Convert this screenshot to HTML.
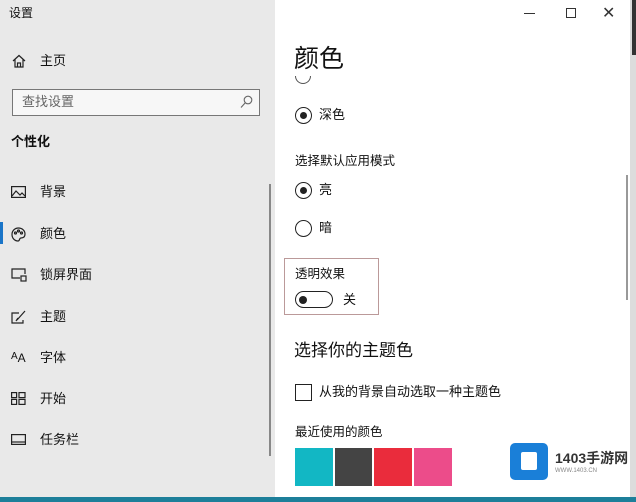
<!DOCTYPE html>
<html><head><meta charset="utf-8"><style>
*{margin:0;padding:0;box-sizing:border-box}
body{width:636px;height:502px;overflow:hidden;position:relative;background:#fff;font-family:"Liberation Sans","Noto Sans CJK SC",sans-serif;color:#111}
.abs{position:absolute}
#side{left:0;top:0;width:275px;height:497px;background:#e9e9e9}
.t{font-size:13px;white-space:nowrap;line-height:1.2}
.ic{position:absolute;left:11px}
</style></head><body>
<div id="side" class="abs"></div>
<div class="abs t" style="left:9px;top:6px;font-size:12px">设置</div>
<svg class="abs" style="left:12px;top:54px" width="14" height="14" viewBox="0 0 14 14" fill="none" stroke="#222" stroke-width="1.2"><path d="M1 7L7 1.5L13 7M3 5.5V13H11V5.5M5.5 13V9H8.5V13"/></svg>
<div class="abs t" style="left:40px;top:53px">主页</div>
<div class="abs" style="left:12px;top:89px;width:248px;height:27px;border:1.5px solid #777;background:#f7f7f7"></div>
<div class="abs t" style="left:22px;top:94px;color:#666">查找设置</div>
<svg class="abs" style="left:240px;top:95px" width="13" height="14" viewBox="0 0 13 14" fill="none" stroke="#666" stroke-width="1.1"><circle cx="8" cy="5" r="3.8"/><path d="M5.3 7.8L1 12.5"/></svg>
<div class="abs t" style="left:11px;top:134px;font-weight:bold">个性化</div>
<div class="abs" style="left:269px;top:184px;width:2px;height:272px;background:#888"></div>
<svg class="ic abs" style="top:186px" width="15" height="12" viewBox="0 0 15 12" fill="none" stroke="#222" stroke-width="1.2"><rect x="0.6" y="0.6" width="13.8" height="10.8"/><path d="M1 10L5 5L9 9L11 7L14 10"/></svg>
<div class="abs t" style="left:40px;top:184px">背景</div>
<div class="abs" style="left:0;top:222px;width:3px;height:22px;background:#1a75c8"></div>
<svg class="ic abs" style="top:227px" width="15" height="15" viewBox="0 0 15 15" fill="none" stroke="#222" stroke-width="1.2"><path d="M7.5 1C3.5 1 1 4 1 7.5S3.5 14 7 14C9 14 8 11 10 11S14 10 14 7C14 3.5 11 1 7.5 1Z"/><circle cx="4.5" cy="6" r="1"/><circle cx="7.5" cy="4" r="1"/><circle cx="10.5" cy="6" r="1"/></svg>
<div class="abs t" style="left:40px;top:226px">颜色</div>
<svg class="ic abs" style="top:268px" width="16" height="14" viewBox="0 0 16 14" fill="none" stroke="#222" stroke-width="1.2"><path d="M9 10H1V1H14V6"/><rect x="10" y="8" width="5" height="5"/></svg>
<div class="abs t" style="left:40px;top:267px">锁屏界面</div>
<svg class="ic abs" style="top:310px" width="16" height="14" viewBox="0 0 16 14" fill="none" stroke="#222" stroke-width="1.2"><path d="M12 10V13H1V3H8"/><path d="M6 10L14 1M5 11L7 8"/></svg>
<div class="abs t" style="left:40px;top:309px">主题</div>
<div class="abs" style="left:11px;top:348px;font-size:10px">A<span style="font-size:12px;position:relative;top:3px">A</span></div>
<div class="abs t" style="left:40px;top:350px">字体</div>
<svg class="ic abs" style="top:392px" width="15" height="13" viewBox="0 0 15 13" fill="none" stroke="#222" stroke-width="1.2"><rect x="0.6" y="0.6" width="5" height="5"/><rect x="8" y="0.6" width="6" height="5"/><rect x="0.6" y="7.4" width="5" height="5"/><rect x="8" y="7.4" width="6" height="5"/></svg>
<div class="abs t" style="left:40px;top:391px">开始</div>
<svg class="ic abs" style="top:434px" width="15" height="11" viewBox="0 0 15 11" fill="none" stroke="#222" stroke-width="1.2"><rect x="0.6" y="0.6" width="13.8" height="9.8"/><path d="M1 8H14"/></svg>
<div class="abs t" style="left:40px;top:432px">任务栏</div>

<div class="abs" style="left:524px;top:13px;width:11px;height:1.2px;background:#333"></div>
<div class="abs" style="left:566px;top:8px;width:10px;height:10px;border:1.2px solid #333"></div>
<div class="abs" style="left:602px;top:3px;font-size:16px;color:#333">✕</div>
<div class="abs" style="left:630px;top:0;width:6px;height:497px;background:#dcdcdc"></div>
<div class="abs" style="left:632px;top:0;width:4px;height:55px;background:#333"></div>
<div class="abs" style="left:626px;top:175px;width:2px;height:125px;background:#999"></div>

<div class="abs" style="left:294px;top:44px;font-size:25px;line-height:1.2">颜色</div>
<div class="abs" style="left:295px;top:76px;width:16px;height:8px;border:1.5px solid #555;border-top:none;border-radius:0 0 8px 8px"></div>
<div class="abs" style="left:295px;top:107px;width:17px;height:17px;border:1.3px solid #222;border-radius:50%"></div><div class="abs" style="left:300px;top:112px;width:7px;height:7px;background:#222;border-radius:50%"></div>
<div class="abs t" style="left:319px;top:107px">深色</div>
<div class="abs t" style="left:295px;top:154px;font-size:12.5px">选择默认应用模式</div>
<div class="abs" style="left:295px;top:182px;width:17px;height:17px;border:1.3px solid #222;border-radius:50%"></div><div class="abs" style="left:300px;top:187px;width:7px;height:7px;background:#222;border-radius:50%"></div>
<div class="abs t" style="left:319px;top:182px">亮</div>
<div class="abs" style="left:295px;top:220px;width:17px;height:17px;border:1.3px solid #222;border-radius:50%"></div>
<div class="abs t" style="left:319px;top:220px">暗</div>
<div class="abs" style="left:284px;top:258px;width:95px;height:57px;border:1px solid #b99"></div>
<div class="abs t" style="left:295px;top:267px;font-size:12.5px">透明效果</div>
<div class="abs" style="left:295px;top:291px;width:38px;height:17px;border:1.3px solid #222;border-radius:9px"></div><div class="abs" style="left:299px;top:296px;width:8px;height:8px;background:#222;border-radius:50%"></div>
<div class="abs t" style="left:343px;top:292px">关</div>
<div class="abs" style="left:294px;top:341px;font-size:17px;line-height:1.2">选择你的主题色</div>
<div class="abs" style="left:295px;top:384px;width:17px;height:17px;border:1.5px solid #222"></div>
<div class="abs t" style="left:319px;top:384px">从我的背景自动选取一种主题色</div>
<div class="abs t" style="left:295px;top:425px;font-size:12.5px">最近使用的颜色</div>
<div class="abs" style="left:295px;top:448px;width:38px;height:38px;background:#12b7c4"></div>
<div class="abs" style="left:335px;top:448px;width:37px;height:38px;background:#444"></div>
<div class="abs" style="left:374px;top:448px;width:38px;height:38px;background:#ea2c3c"></div>
<div class="abs" style="left:414px;top:448px;width:38px;height:38px;background:#ec4c8a"></div>
<div class="abs" style="left:510px;top:443px;width:38px;height:37px;background:#1a7fd8;border-radius:5px"></div>
<div class="abs" style="left:521px;top:452px;width:16px;height:18px;background:#fff;border-radius:2px"></div>
<div class="abs" style="left:555px;top:450px;font-size:14px;font-weight:bold;color:#333;line-height:1.2">1403手游网</div>
<div class="abs" style="left:555px;top:468px;font-size:6px;color:#888">WWW.1403.CN</div>
<div class="abs" style="left:0;top:497px;width:636px;height:5px;background:#1d7f9a"></div>
</body></html>
